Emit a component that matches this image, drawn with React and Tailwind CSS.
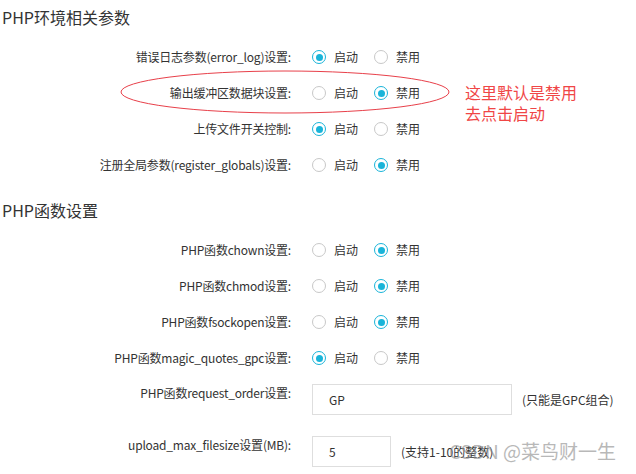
const envRows = [
  { label: '错误日志参数(error_log)设置:', on: true },
  { label: '输出缓冲区数据块设置:', on: false },
  { label: '上传文件开关控制:', on: true },
  { label: '注册全局参数(register_globals)设置:', on: false },
];

const funcRows = [
  { label: 'PHP函数chown设置:', on: false },
  { label: 'PHP函数chmod设置:', on: false },
  { label: 'PHP函数fsockopen设置:', on: false },
  { label: 'PHP函数magic_quotes_gpc设置:', on: true },
];

function Radio({ checked }) {
  return checked ? (
    <span className="shrink-0 w-[14px] h-[14px] rounded-full border-[1.5px] border-[#19b4d9] flex items-center justify-center">
      <span className="w-[7px] h-[7px] rounded-full bg-[#19b4d9]" />
    </span>
  ) : (
    <span className="shrink-0 block w-[14px] h-[14px] rounded-full border border-[#c8c8c8] bg-white" />
  );
}

function SwitchRow({ label, on }) {
  return (
    <div className="h-[36px] flex items-center">
      <div className="w-[291px] text-right text-[12px] tracking-[-0.2px] text-[#333]">{label}</div>
      <div className="ml-[21px] flex items-center">
        <Radio checked={on} />
        <span className="ml-[8px] text-[12px] text-[#333]">启动</span>
        <span className="ml-[16px]">
          <Radio checked={!on} />
        </span>
        <span className="ml-[8px] text-[12px] text-[#333]">禁用</span>
      </div>
    </div>
  );
}

function InputRow({ label, value, width, hint, className }) {
  return (
    <div className={`flex items-start ${className}`}>
      <div className="w-[291px] text-right text-[12px] leading-[18px] tracking-[-0.2px] text-[#333]">{label}</div>
      <div className={`ml-[21px] h-[31px] border border-[#dedede] flex items-center pl-[16px] text-[12px] text-[#333] ${width}`}>
        {value}
      </div>
      <div className="ml-[10px] h-[31px] flex items-center text-[12px] text-[#333]">{hint}</div>
    </div>
  );
}

export default function App() {
  return (
    <div
      className="relative w-[636px] h-[474px] overflow-hidden bg-white"
      style={{ fontFamily: '"Noto Sans CJK SC", "Noto Sans", sans-serif' }}
    >
      <h2 className="pl-[2px] pt-[6px] text-[16px] leading-[22px] text-[#333]">PHP环境相关参数</h2>
      <div className="mt-[11px]">
        {envRows.map((r) => (
          <SwitchRow key={r.label} {...r} />
        ))}
      </div>

      <h2 className="mt-[16px] pl-[2px] text-[16px] leading-[22px] text-[#333]">PHP函数设置</h2>
      <div className="mt-[11px]">
        {funcRows.map((r) => (
          <SwitchRow key={r.label} {...r} />
        ))}
      </div>

      <InputRow
        className="mt-[8px]"
        label="PHP函数request_order设置:"
        value="GP"
        width="w-[200px]"
        hint="(只能是GPC组合)"
      />
      <InputRow
        className="mt-[21px]"
        label="upload_max_filesize设置(MB):"
        value="5"
        width="w-[79px]"
        hint="(支持1-10的整数)"
      />

      {/* annotation */}
      <svg className="absolute left-0 top-0 pointer-events-none" width="636" height="474">
        <ellipse cx="285" cy="92" rx="164" ry="21" fill="none" stroke="#e8404a" strokeWidth="1" />
      </svg>
      <div className="absolute left-[465px] top-[82px] text-[16px] leading-[21px] text-[#f04646]">
        <div>这里默认是禁用</div>
        <div>去点击启动</div>
      </div>

      <div className="absolute left-[449px] top-[439px] text-[19px] leading-[24px] text-[#8a8a8a] opacity-60 whitespace-nowrap">
        CSDN @菜鸟财一生
      </div>
    </div>
  );
}
